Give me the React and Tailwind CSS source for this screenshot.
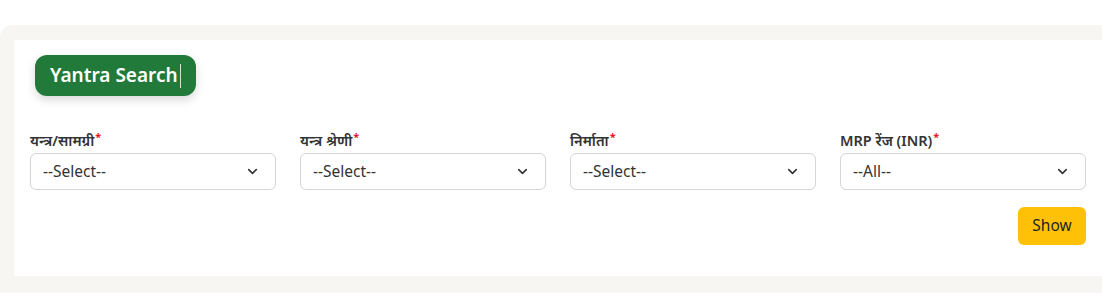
import { FiChevronDown } from "react-icons/fi";

const fields = [
  { label: "यन्त्र/सामग्री", value: "--Select--" },
  { label: "यन्त्र श्रेणी", value: "--Select--" },
  { label: "निर्माता", value: "--Select--" },
  { label: "MRP रेंज (INR)", value: "--All--" },
];

export default function App() {
  return (
    <div className="bg-white pt-[25px] font-['Noto_Sans','Noto_Sans_Devanagari',sans-serif] text-[#212529]">
      <div className="bg-[#f7f6f2] rounded-tl-xl pl-[14px] pt-[15px] pb-[17px]">
        <div className="bg-white px-4 pt-[15px] pb-[31px]">
          <div className="ml-[5px] inline-flex items-center h-[41px] pl-[15px] pr-[15px] rounded-xl bg-[#217a39] text-white text-[19px] font-semibold shadow-[0_4px_10px_rgba(0,0,0,0.15)]">
            Yantra Search
            <span className="ml-[2px] w-px h-[24px] bg-white/80"></span>
          </div>

          <div className="grid grid-cols-4 gap-6 mt-[33px]">
            {fields.map((f) => (
              <div key={f.label}>
                <label className="block text-[14.5px] font-semibold leading-[22px] mb-[2px] text-[#333]">
                  {f.label}
                  <sup className="text-red-600 text-[11px] ml-[1px]">*</sup>
                </label>
                <div className="flex items-center justify-between h-[37px] border border-[#d6d6d6] rounded-md pl-3 pr-[15px] text-[15.5px] text-[#333]">
                  <span>{f.value}</span>
                  <FiChevronDown className="text-[15px] text-[#333]" strokeWidth={2.5} />
                </div>
              </div>
            ))}
          </div>

          <div className="flex justify-end mt-[17px]">
            <button className="h-[38px] w-[68px] rounded-md bg-[#ffc107] text-[15.5px] text-[#212529]">
              Show
            </button>
          </div>
        </div>
      </div>
    </div>
  );
}
